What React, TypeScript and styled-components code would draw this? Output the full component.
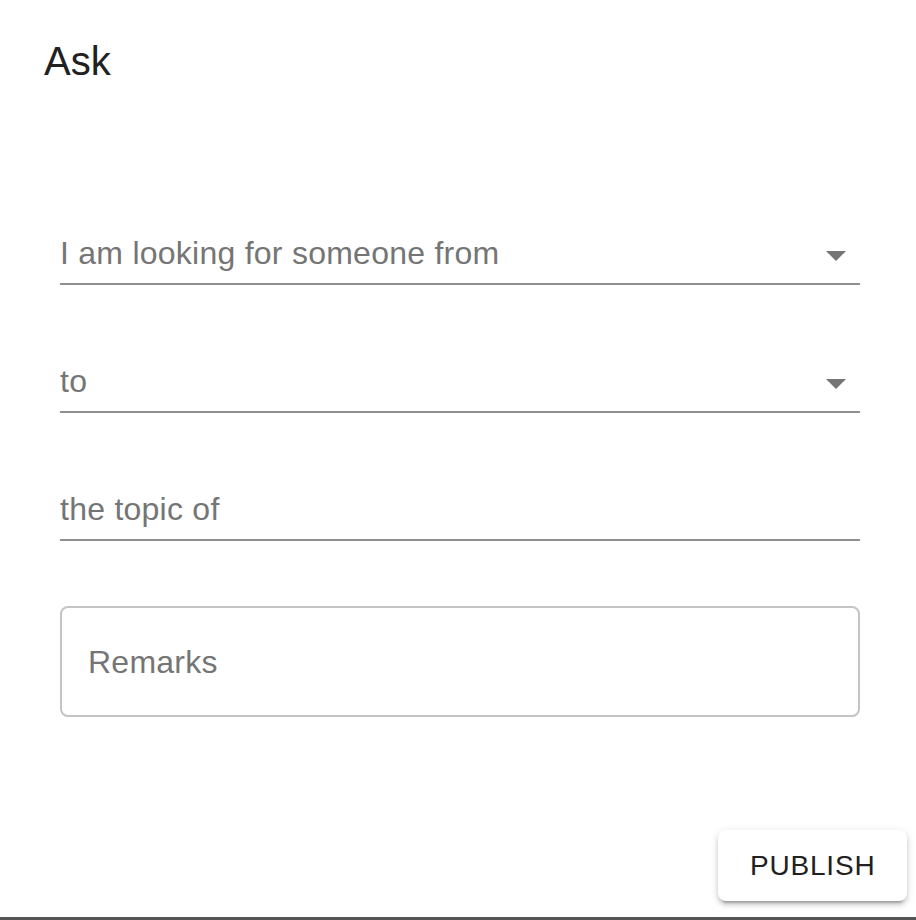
import styled, { createGlobalStyle } from "styled-components";

const GlobalStyle = createGlobalStyle`
  html, body {
    margin: 0;
    padding: 0;
    background: #ffffff;
  }
  body {
    font-family: "Liberation Sans", Arial, Helvetica, sans-serif;
  }
`;

const StyledDialog = styled.main`
  display: flex;
  flex-direction: column;
  box-sizing: border-box;
  width: 916px;
  height: 920px;
  background: #ffffff;
  border-bottom: 3px solid #555555;
`;

const StyledTitle = styled.h2`
  margin: 0;
  padding: 29px 0 0 44px;
  font-size: 40px;
  font-weight: 400;
  line-height: 64px;
  color: #212121;
`;

const StyledForm = styled.form`
  display: flex;
  flex-direction: column;
  gap: 79px;
  width: 800px;
  margin: 143px 0 0 60px;
`;

const StyledField = styled.div`
  display: flex;
  align-items: flex-end;
  height: 33px;
  padding-bottom: 14px;
  border-bottom: 2px solid #8f8f8f;
`;

const StyledLabel = styled.span`
  flex: 1;
  font-size: 32px;
  line-height: 32px;
  letter-spacing: 0.25px;
  color: #757575;
`;

const StyledArrow = styled.svg`
  align-self: center;
  width: 48px;
  height: 48px;
  margin-top: 5px;
  fill: #757575;
`;

const StyledRemarks = styled.div`
  margin-top: -14px;
  padding: 38px 26px 37px;
  border: 2px solid #c4c4c4;
  border-radius: 8px;
  font-size: 32px;
  line-height: 32px;
  letter-spacing: 0.25px;
  color: #757575;
`;

const StyledActions = styled.div`
  display: flex;
  justify-content: flex-end;
  margin-top: auto;
  padding: 0 9px 16px 0;
`;

const StyledButton = styled.button`
  box-sizing: border-box;
  width: 189px;
  height: 71px;
  padding: 0 32px;
  border: none;
  border-radius: 8px;
  background: #ffffff;
  font-family: "Liberation Sans", Arial, sans-serif;
  font-size: 28px;
  letter-spacing: 0.8px;
  color: #212121;
  box-shadow: 0 6px 2px -4px rgba(0, 0, 0, 0.2), 0 4px 4px 0 rgba(0, 0, 0, 0.14),
    0 2px 10px 0 rgba(0, 0, 0, 0.12);
  cursor: pointer;
`;

function DropArrow() {
  return (
    <StyledArrow viewBox="0 0 24 24" aria-hidden="true">
      <path d="M7 10l5 5 5-5z" />
    </StyledArrow>
  );
}

function App() {
  return (
    <>
      <GlobalStyle />
      <StyledDialog>
        <StyledTitle>Ask</StyledTitle>
        <StyledForm>
          <StyledField>
            <StyledLabel>I am looking for someone from</StyledLabel>
            <DropArrow />
          </StyledField>
          <StyledField>
            <StyledLabel>to</StyledLabel>
            <DropArrow />
          </StyledField>
          <StyledField>
            <StyledLabel>the topic of</StyledLabel>
          </StyledField>
          <StyledRemarks>Remarks</StyledRemarks>
        </StyledForm>
        <StyledActions>
          <StyledButton type="button">PUBLISH</StyledButton>
        </StyledActions>
      </StyledDialog>
    </>
  );
}

export default App;
